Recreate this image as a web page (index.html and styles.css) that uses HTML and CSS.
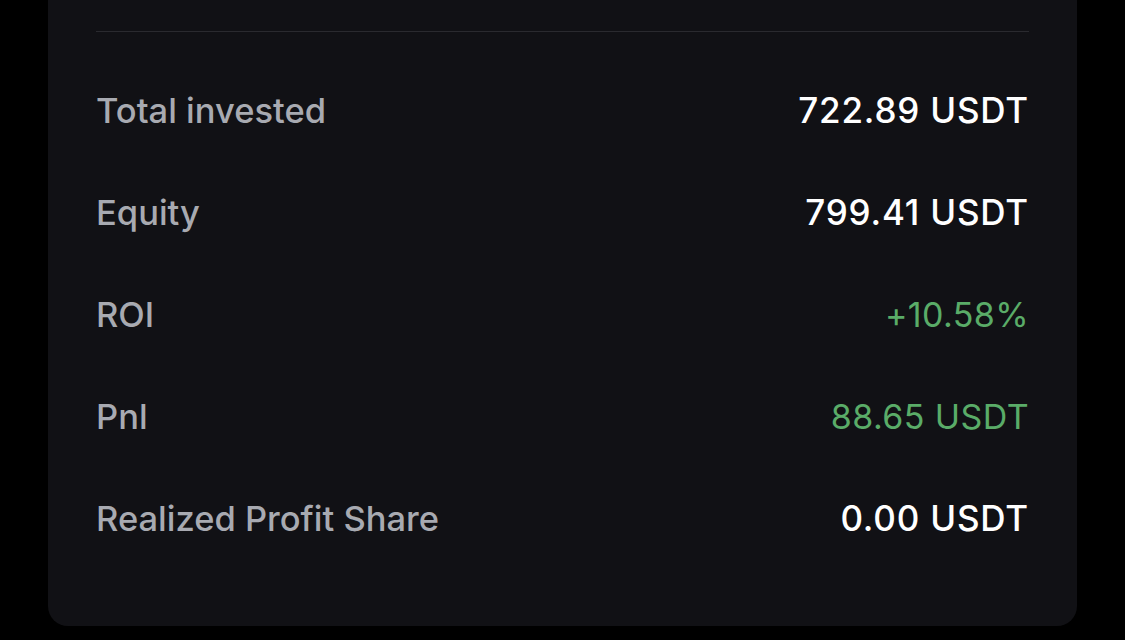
FILE: index.html
```html
<!DOCTYPE html>
<html lang="en">
<head>
  <meta charset="UTF-8" />
  <title>Bot details</title>
  <link rel="stylesheet" href="styles.css">
</head>
<body>
  <div class="card">
    <div class="divider"></div>
    <div class="rows">
      <div class="row">
        <span class="label">Total invested</span>
        <span class="value">722.89 USDT</span>
      </div>
      <div class="row">
        <span class="label">Equity</span>
        <span class="value">799.41 USDT</span>
      </div>
      <div class="row">
        <span class="label">ROI</span>
        <span class="value up">+10.58%</span>
      </div>
      <div class="row">
        <span class="label">Pnl</span>
        <span class="value up">88.65 USDT</span>
      </div>
      <div class="row">
        <span class="label">Realized Profit Share</span>
        <span class="value">0.00 USDT</span>
      </div>
    </div>
  </div>
</body>
</html>
```

FILE: styles.css
```css
body {
  margin: 0;
  background: #000000;
  font-family: Inter, "Noto Sans", sans-serif;
  height: 640px;
  overflow: hidden;
}

.card {
  margin: -20px 48px 0 48px;
  padding: 51px 48px 57px 48px;
  background: #111115;
  border-radius: 0 0 20px 20px;
}

.divider {
  height: 1px;
  background: #2a2a2f;
  margin-bottom: 27px;
}

.row {
  height: 102px;
  display: flex;
  justify-content: space-between;
  align-items: center;
}

.label {
  color: #a8aab1;
  font-size: 34.5px;
  font-weight: 500;
}

.value {
  color: #ffffff;
  font-size: 35px;
  font-weight: 500;
  letter-spacing: 0.8px;
}

.value.up {
  color: #5aac68;
  font-size: 34px;
  font-weight: 400;
  letter-spacing: 0.4px;
}
```
